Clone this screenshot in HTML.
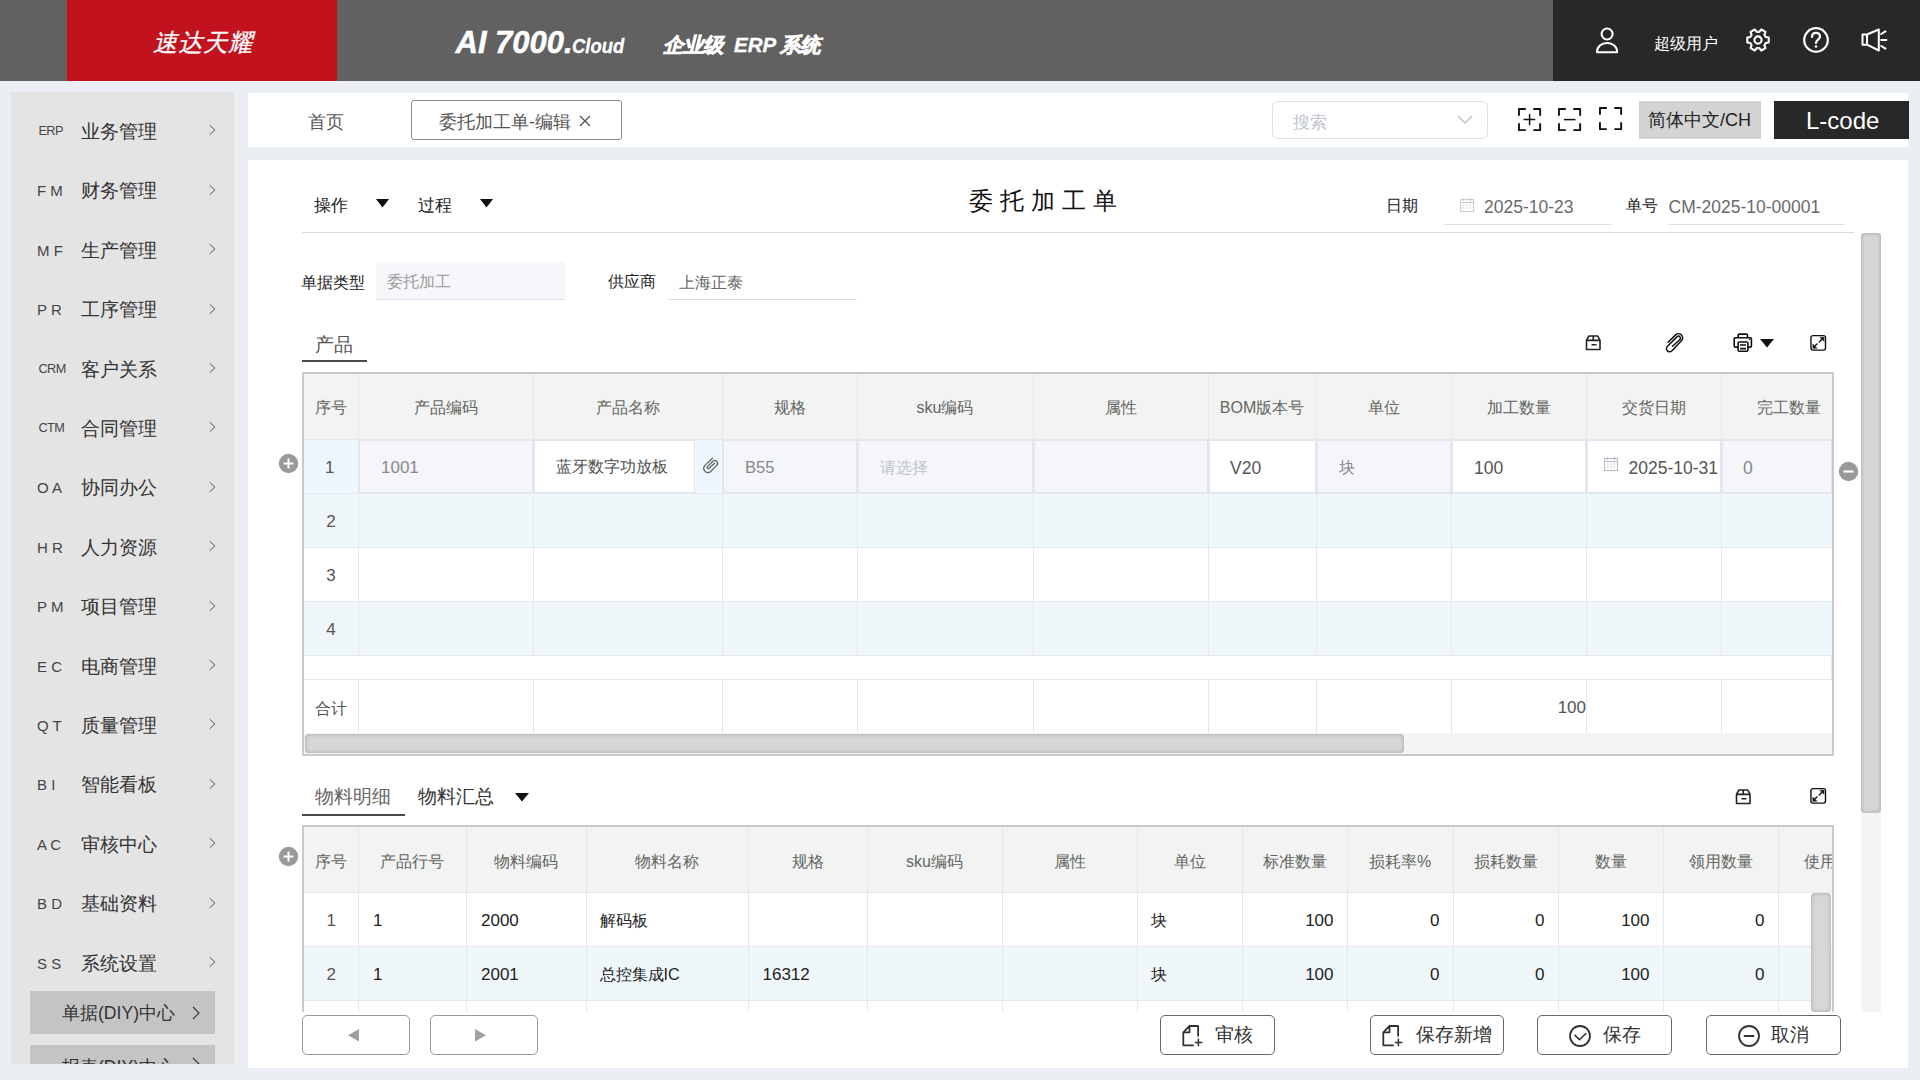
<!DOCTYPE html>
<html><head><meta charset="utf-8"><title>委托加工单</title>
<style>
html,body{margin:0;padding:0;}
body{width:1920px;height:1080px;overflow:hidden;background:#ebeef3;position:relative;font-family:"Liberation Sans",sans-serif;}
body div, body svg{position:absolute;}
body div div, body div svg{position:absolute;}
</style></head><body>
<div style="left:0px;top:0px;width:1920px;height:81px;background:#616161"></div>
<div style="left:67px;top:0px;width:270px;height:81px;background:#c1121e"></div>
<div style="left:1553px;top:0px;width:367px;height:81px;background:#282828"></div>
<div style="left:153px;top:28.00px;white-space:nowrap;font-size:24.5px;line-height:30px;color:#fff;font-style:italic;-webkit-text-stroke:0.3px #fff">速达天耀</div>
<div style="left:455.5px;top:22.5px;font-size:31px;line-height:40px;color:#fff;font-style:italic;font-weight:bold;white-space:nowrap;-webkit-text-stroke:0.5px #fff">AI 7000.</div>
<div style="left:571.5px;top:30.5px;font-size:20px;line-height:30px;color:#fff;font-style:italic;font-weight:bold;white-space:nowrap;transform:scaleX(0.92);transform-origin:0 0;-webkit-text-stroke:0.3px #fff">Cloud</div>
<div style="left:663px;top:29.50px;white-space:nowrap;font-size:20.5px;line-height:30px;color:#fff;font-style:italic;font-weight:bold;-webkit-text-stroke:0.6px #fff">企业级</div>
<div style="left:734px;top:30.00px;white-space:nowrap;font-size:20.5px;line-height:30px;color:#fff;font-style:italic;font-weight:bold;-webkit-text-stroke:0.3px #fff">ERP</div>
<div style="left:779.5px;top:29.50px;white-space:nowrap;font-size:20.5px;line-height:30px;color:#fff;font-style:italic;font-weight:bold;-webkit-text-stroke:0.6px #fff">系统</div>
<div style="left:1654px;top:31.50px;white-space:nowrap;font-size:16px;line-height:24px;color:#fff;">超级用户</div>
<svg style="left:1594px;top:26px" width="26" height="30" viewBox="0 0 26 30" fill="none" stroke="#fff" stroke-width="2" stroke-linejoin="round">
<circle cx="13.1" cy="8" r="5.5"/><path d="M3 26.3C3 20.8 7.5 17 13.1 17C18.7 17 23.2 20.8 23.2 26.3Z"/></svg>
<svg style="left:1746px;top:28px" width="24" height="24" viewBox="0 0 24 24" fill="none" stroke="#fff" stroke-width="2.1" stroke-linejoin="round">
<path d="M19.66 9.06 L22.72 9.53 L22.72 14.47 L19.66 14.94 L18.37 17.16 L19.50 20.04 L15.22 22.52 L13.28 20.10 L10.72 20.10 L8.78 22.52 L4.50 20.04 L5.63 17.16 L4.34 14.94 L1.28 14.47 L1.28 9.53 L4.34 9.06 L5.63 6.84 L4.50 3.96 L8.78 1.48 L10.72 3.90 L13.28 3.90 L15.22 1.48 L19.50 3.96 L18.37 6.84Z"/><circle cx="12" cy="12" r="3.6"/></svg>
<svg style="left:1802px;top:26px" width="28" height="28" viewBox="0 0 28 28" fill="none" stroke="#fff" stroke-width="2.2">
<circle cx="14" cy="14" r="11.8"/><path d="M10 11 C10 8 12 6.8 14 6.8 C16.3 6.8 18 8.3 18 10.5 C18 13.5 14 13.8 14 17" stroke-linecap="round"/><circle cx="14" cy="20.5" r="1.3" fill="#fff" stroke="none"/></svg>
<svg style="left:1860px;top:27px" width="28" height="26" viewBox="0 0 28 26" fill="none" stroke="#fff" stroke-width="2" stroke-linejoin="round">
<path d="M2.5 7.5h4.5L18.8 2.5v21L7 17.7H2.5z"/><path d="M7 7.5v10.2"/><path d="M21.2 7l4.3-2.6M21.2 13h5.2M21.2 19l4.3 2.6" stroke-linecap="round"/></svg>
<div style="left:11px;top:92px;width:223px;height:972px;background:#e4e4e4"></div>
<div style="left:38.5px;top:121.30px;white-space:nowrap;font-size:12.7px;line-height:20px;color:#444;letter-spacing:-0.6px">ERP</div>
<div style="left:81px;top:119.50px;white-space:nowrap;font-size:19.3px;line-height:24px;color:#333;">业务管理</div>
<svg style="left:207px;top:124.0px" width="10" height="14" viewBox="0 0 10 14" fill="none" stroke="#444" stroke-width="0.9"><path d="M2.7 1.3L7.9 6L2.7 10.7"/></svg>
<div style="left:37px;top:181.30px;white-space:nowrap;font-size:15px;line-height:20px;color:#444;">F M</div>
<div style="left:81px;top:179.00px;white-space:nowrap;font-size:19.3px;line-height:24px;color:#333;">财务管理</div>
<svg style="left:207px;top:183.5px" width="10" height="14" viewBox="0 0 10 14" fill="none" stroke="#444" stroke-width="0.9"><path d="M2.7 1.3L7.9 6L2.7 10.7"/></svg>
<div style="left:37px;top:240.80px;white-space:nowrap;font-size:15px;line-height:20px;color:#444;">M F</div>
<div style="left:81px;top:238.50px;white-space:nowrap;font-size:19.3px;line-height:24px;color:#333;">生产管理</div>
<svg style="left:207px;top:243.0px" width="10" height="14" viewBox="0 0 10 14" fill="none" stroke="#444" stroke-width="0.9"><path d="M2.7 1.3L7.9 6L2.7 10.7"/></svg>
<div style="left:37px;top:300.30px;white-space:nowrap;font-size:15px;line-height:20px;color:#444;">P R</div>
<div style="left:81px;top:298.00px;white-space:nowrap;font-size:19.3px;line-height:24px;color:#333;">工序管理</div>
<svg style="left:207px;top:302.5px" width="10" height="14" viewBox="0 0 10 14" fill="none" stroke="#444" stroke-width="0.9"><path d="M2.7 1.3L7.9 6L2.7 10.7"/></svg>
<div style="left:38.5px;top:359.30px;white-space:nowrap;font-size:12.7px;line-height:20px;color:#444;letter-spacing:-0.6px">CRM</div>
<div style="left:81px;top:357.50px;white-space:nowrap;font-size:19.3px;line-height:24px;color:#333;">客户关系</div>
<svg style="left:207px;top:362.0px" width="10" height="14" viewBox="0 0 10 14" fill="none" stroke="#444" stroke-width="0.9"><path d="M2.7 1.3L7.9 6L2.7 10.7"/></svg>
<div style="left:38.5px;top:418.30px;white-space:nowrap;font-size:12.7px;line-height:20px;color:#444;letter-spacing:-0.6px">CTM</div>
<div style="left:81px;top:416.50px;white-space:nowrap;font-size:19.3px;line-height:24px;color:#333;">合同管理</div>
<svg style="left:207px;top:421.0px" width="10" height="14" viewBox="0 0 10 14" fill="none" stroke="#444" stroke-width="0.9"><path d="M2.7 1.3L7.9 6L2.7 10.7"/></svg>
<div style="left:37px;top:478.30px;white-space:nowrap;font-size:15px;line-height:20px;color:#444;">O A</div>
<div style="left:81px;top:476.00px;white-space:nowrap;font-size:19.3px;line-height:24px;color:#333;">协同办公</div>
<svg style="left:207px;top:480.5px" width="10" height="14" viewBox="0 0 10 14" fill="none" stroke="#444" stroke-width="0.9"><path d="M2.7 1.3L7.9 6L2.7 10.7"/></svg>
<div style="left:37px;top:537.80px;white-space:nowrap;font-size:15px;line-height:20px;color:#444;">H R</div>
<div style="left:81px;top:535.50px;white-space:nowrap;font-size:19.3px;line-height:24px;color:#333;">人力资源</div>
<svg style="left:207px;top:540.0px" width="10" height="14" viewBox="0 0 10 14" fill="none" stroke="#444" stroke-width="0.9"><path d="M2.7 1.3L7.9 6L2.7 10.7"/></svg>
<div style="left:37px;top:597.30px;white-space:nowrap;font-size:15px;line-height:20px;color:#444;">P M</div>
<div style="left:81px;top:595.00px;white-space:nowrap;font-size:19.3px;line-height:24px;color:#333;">项目管理</div>
<svg style="left:207px;top:599.5px" width="10" height="14" viewBox="0 0 10 14" fill="none" stroke="#444" stroke-width="0.9"><path d="M2.7 1.3L7.9 6L2.7 10.7"/></svg>
<div style="left:37px;top:656.80px;white-space:nowrap;font-size:15px;line-height:20px;color:#444;">E C</div>
<div style="left:81px;top:654.50px;white-space:nowrap;font-size:19.3px;line-height:24px;color:#333;">电商管理</div>
<svg style="left:207px;top:659.0px" width="10" height="14" viewBox="0 0 10 14" fill="none" stroke="#444" stroke-width="0.9"><path d="M2.7 1.3L7.9 6L2.7 10.7"/></svg>
<div style="left:37px;top:715.80px;white-space:nowrap;font-size:15px;line-height:20px;color:#444;">Q T</div>
<div style="left:81px;top:713.50px;white-space:nowrap;font-size:19.3px;line-height:24px;color:#333;">质量管理</div>
<svg style="left:207px;top:718.0px" width="10" height="14" viewBox="0 0 10 14" fill="none" stroke="#444" stroke-width="0.9"><path d="M2.7 1.3L7.9 6L2.7 10.7"/></svg>
<div style="left:37px;top:775.30px;white-space:nowrap;font-size:15px;line-height:20px;color:#444;">B I</div>
<div style="left:81px;top:773.00px;white-space:nowrap;font-size:19.3px;line-height:24px;color:#333;">智能看板</div>
<svg style="left:207px;top:777.5px" width="10" height="14" viewBox="0 0 10 14" fill="none" stroke="#444" stroke-width="0.9"><path d="M2.7 1.3L7.9 6L2.7 10.7"/></svg>
<div style="left:37px;top:834.80px;white-space:nowrap;font-size:15px;line-height:20px;color:#444;">A C</div>
<div style="left:81px;top:832.50px;white-space:nowrap;font-size:19.3px;line-height:24px;color:#333;">审核中心</div>
<svg style="left:207px;top:837.0px" width="10" height="14" viewBox="0 0 10 14" fill="none" stroke="#444" stroke-width="0.9"><path d="M2.7 1.3L7.9 6L2.7 10.7"/></svg>
<div style="left:37px;top:894.30px;white-space:nowrap;font-size:15px;line-height:20px;color:#444;">B D</div>
<div style="left:81px;top:892.00px;white-space:nowrap;font-size:19.3px;line-height:24px;color:#333;">基础资料</div>
<svg style="left:207px;top:896.5px" width="10" height="14" viewBox="0 0 10 14" fill="none" stroke="#444" stroke-width="0.9"><path d="M2.7 1.3L7.9 6L2.7 10.7"/></svg>
<div style="left:37px;top:953.80px;white-space:nowrap;font-size:15px;line-height:20px;color:#444;">S S</div>
<div style="left:81px;top:951.50px;white-space:nowrap;font-size:19.3px;line-height:24px;color:#333;">系统设置</div>
<svg style="left:207px;top:956.0px" width="10" height="14" viewBox="0 0 10 14" fill="none" stroke="#444" stroke-width="0.9"><path d="M2.7 1.3L7.9 6L2.7 10.7"/></svg>
<div style="left:30px;top:991px;width:185px;height:43px;background:#c4c4c4"></div>
<div style="left:62px;top:1001.00px;white-space:nowrap;font-size:17.6px;line-height:24px;color:#333;">单据(DIY)中心</div>
<svg style="left:190px;top:1005px" width="12" height="16" viewBox="0 0 12 16" fill="none" stroke="#333" stroke-width="1.1"><path d="M3 2l6 6-6 6"/></svg>
<div style="left:30px;top:1045px;width:185px;height:19px;background:#c4c4c4;overflow:hidden"><div style="left:32px;top:10px;font-size:17.6px;line-height:24px;color:#333;white-space:nowrap">报表(DIY)中心</div><svg style="left:160px;top:11px" width="12" height="16" viewBox="0 0 12 16" fill="none" stroke="#333" stroke-width="1.1"><path d="M3 2l6 6-6 6"/></svg></div>
<div style="left:248px;top:93px;width:1660px;height:54px;background:#fff"></div>
<div style="left:308px;top:110.10px;white-space:nowrap;font-size:18px;line-height:24px;color:#555;">首页</div>
<div style="left:411px;top:100px;width:209px;height:38px;border:1px solid #8c8c8c;border-radius:3px;background:#fff"></div>
<div style="left:439px;top:110.10px;white-space:nowrap;font-size:18px;line-height:24px;color:#555;">委托加工单-编辑</div>
<svg style="left:578px;top:114px" width="14" height="14" viewBox="0 0 14 14" stroke="#555" stroke-width="1.4"><path d="M2 2l10 10M12 2L2 12"/></svg>
<div style="left:1272px;top:101px;width:214px;height:36px;border:1px solid #dcdfe6;border-radius:5px;background:#fff"></div>
<div style="left:1293px;top:110.00px;white-space:nowrap;font-size:16.5px;line-height:24px;color:#c0c4cc;">搜索</div>
<svg style="left:1456px;top:113px" width="18" height="14" viewBox="0 0 18 14" fill="none" stroke="#c0c4cc" stroke-width="1.5"><path d="M2 3l7 7 7-7"/></svg>
<svg style="left:1516.8px;top:106.8px" width="25" height="25" viewBox="0 0 25 25" fill="none" stroke="#111" stroke-width="1.9" stroke-linejoin="round">
<path d="M8.8 1.95H1.95V8.8M16.3 1.95H23.15V8.8M23.15 16.3V23.15H16.3M8.8 23.15H1.95V16.3"/><path d="M6.6 12.6h11.6M12.6 7v11.2" stroke-width="1.5"/></svg>
<svg style="left:1557.1px;top:106.8px" width="25" height="25" viewBox="0 0 25 25" fill="none" stroke="#111" stroke-width="1.9" stroke-linejoin="round">
<path d="M8.8 1.95H1.95V8.8M16.3 1.95H23.15V8.8M23.15 16.3V23.15H16.3M8.8 23.15H1.95V16.3"/><path d="M6.9 12.6h11.6" stroke-width="1.5"/></svg>
<svg style="left:1597.75px;top:105.9px" width="25" height="25" viewBox="0 0 25 25" fill="none" stroke="#111" stroke-width="1.9" stroke-linejoin="round">
<path d="M8.8 1.95H1.95V8.8M16.3 1.95H23.15V8.8M23.15 16.3V23.15H16.3M8.8 23.15H1.95V16.3"/></svg>
<div style="left:1639px;top:101px;width:122px;height:38px;background:#d3d3d3"></div>
<div style="left:1648px;top:108.00px;white-space:nowrap;font-size:18px;line-height:24px;color:#222;">简体中文/CH</div>
<div style="left:1774px;top:101px;width:135px;height:38px;background:#282828"></div>
<div style="left:1806px;top:106.00px;white-space:nowrap;font-size:24px;line-height:30px;color:#fff;">L-code</div>
<div style="left:248px;top:160px;width:1660px;height:908px;background:#fff"></div>
<div style="left:314px;top:194.00px;white-space:nowrap;font-size:17px;line-height:24px;color:#222;">操作</div>
<svg style="left:376px;top:199px" width="13" height="9" viewBox="0 0 13 9"><path d="M0 0h13L6.5 8.5z" fill="#111"/></svg>
<div style="left:417.5px;top:194.00px;white-space:nowrap;font-size:17px;line-height:24px;color:#222;">过程</div>
<svg style="left:479.5px;top:199px" width="13" height="9" viewBox="0 0 13 9"><path d="M0 0h13L6.5 8.5z" fill="#111"/></svg>
<div style="left:968.5px;top:186.25px;white-space:nowrap;font-size:24px;line-height:30px;color:#111;letter-spacing:7px">委托加工单</div>
<div style="left:302px;top:232px;width:1552px;height:1px;background:#dcdcdc"></div>
<div style="left:1386px;top:194.25px;white-space:nowrap;font-size:16px;line-height:24px;color:#222;">日期</div>
<div style="left:1444px;top:224px;width:167px;height:1px;background:#dcdfe6"></div>
<svg style="left:1459px;top:197px" width="16" height="16" viewBox="0 0 16 16" fill="none" stroke="#c8ccd4" stroke-width="1.1">
<rect x="1.5" y="2.5" width="13" height="12"/><path d="M1.5 5.5h13M4.5 1v3M11.5 1v3"/><path d="M4 8h1.5M7.3 8h1.5M10.5 8h1.5M4 11h1.5M7.3 11h1.5M10.5 11h1.5" stroke-width="1"/></svg>
<div style="left:1484px;top:195.00px;white-space:nowrap;font-size:17.5px;line-height:24px;color:#6a6a6a;">2025-10-23</div>
<div style="left:1625.5px;top:194.25px;white-space:nowrap;font-size:16px;line-height:24px;color:#222;">单号</div>
<div style="left:1669px;top:224px;width:176px;height:1px;background:#dcdfe6"></div>
<div style="left:1668.5px;top:195.00px;white-space:nowrap;font-size:17.5px;line-height:24px;color:#6a6a6a;">CM-2025-10-00001</div>
<div style="left:1861px;top:233px;width:20px;height:779px;background:#f4f4f4"></div>
<div style="left:1861px;top:233px;width:20px;height:580px;background:#d7d7d7;box-shadow:inset 0 0 4px rgba(0,0,0,0.25);border-radius:4px"></div>
<div style="left:300.5px;top:270.10px;white-space:nowrap;font-size:16.2px;line-height:24px;color:#222;">单据类型</div>
<div style="left:376px;top:262px;width:189px;height:37px;background:#f5f7fa;border-bottom:1px solid #dcdfe6"></div>
<div style="left:386.5px;top:269.50px;white-space:nowrap;font-size:16px;line-height:24px;color:#9a9a9a;">委托加工</div>
<div style="left:608px;top:270.10px;white-space:nowrap;font-size:16px;line-height:24px;color:#222;">供应商</div>
<div style="left:668px;top:299px;width:189px;height:1px;background:#dcdfe6"></div>
<div style="left:678.5px;top:269.50px;white-space:nowrap;font-size:16.2px;line-height:24px;color:#666;">上海正泰</div>
<div style="left:315px;top:332.50px;white-space:nowrap;font-size:18.5px;line-height:24px;color:#555;">产品</div>
<div style="left:302px;top:360px;width:65px;height:2px;background:#4a4a4a"></div>
<svg style="left:1584px;top:333px" width="19" height="19" viewBox="0 0 19 19" fill="none" stroke="#222" stroke-width="1.6" stroke-linejoin="round">
<path d="M5 3h8.8l2.2 4.4v9.1H2.5V7.4z"/><path d="M2.5 7.4h13.5M9.25 3v4.4M7.5 11.7h5"/></svg>
<svg style="left:1660px;top:328px" width="30" height="30" viewBox="0 0 30 30" fill="none" stroke="#111" stroke-width="1.5" stroke-linecap="round" stroke-linejoin="round">
<path d="M8.1 14.2L15.6 6.9A4 4 0 0 1 21.4 12.8L11.7 23A2.9 2.9 0 0 1 7.5 18.3L17.2 8.6A1.75 1.75 0 0 1 19.7 11.7L12.5 18.3"/></svg>
<svg style="left:1732px;top:332px" width="22" height="22" viewBox="0 0 22 22" fill="none" stroke="#111" stroke-width="1.6" stroke-linejoin="round">
<path d="M6.2 5.8V3.1a1 1 0 0 1 1-1h7.3a1 1 0 0 1 1 1v2.7"/><path d="M6.1 15.1H3.2a1 1 0 0 1-1-1V6.8a1 1 0 0 1 1-1h15.2a1 1 0 0 1 1 1v7.3a1 1 0 0 1-1 1H15.9"/><rect x="6.1" y="10" width="9.8" height="9.2" rx="1"/><path d="M8 13h6M8 16.6h6"/><circle cx="17.5" cy="7.4" r="0.7" fill="#111" stroke="none"/></svg>
<svg style="left:1760px;top:339px" width="14" height="9" viewBox="0 0 14 9"><path d="M0 0h14L7 8.5z" fill="#111"/></svg>
<svg style="left:1809px;top:334px" width="18" height="18" viewBox="0 0 18 18" fill="none" stroke="#111" stroke-width="1.4" stroke-linecap="round">
<rect x="1.95" y="1.6" width="14.55" height="14.5" rx="2"/><path d="M10.3 7.9L13.6 4.6M4.8 13.1L8 9.9"/><path d="M11.2 3.3h3.7v3.7zM3.9 10.5v3.7h3.7z" fill="#111" stroke-width="0.6" stroke-linejoin="round"/></svg>
<div style="left:302px;top:372px;width:1532px;height:384px;background:#c9c9c9"></div>
<div style="left:304px;top:374px;width:1528px;height:380px;background:#fff"></div>
<div style="left:304px;top:374px;width:1528px;height:66px;background:#f3f3f3"></div>
<div style="left:304px;top:440px;width:1528px;height:53px;background:#f4f5fa"></div>
<div style="left:304px;top:440px;width:54px;height:53px;background:#eef6fe"></div>
<div style="left:304px;top:494px;width:1528px;height:53px;background:#f0f7fb"></div>
<div style="left:304px;top:548px;width:1528px;height:53px;background:#fff"></div>
<div style="left:304px;top:602px;width:1528px;height:53px;background:#f0f7fb"></div>
<div style="left:304px;top:439px;width:1528px;height:1px;background:#e6e8f0"></div>
<div style="left:304px;top:493px;width:1528px;height:1px;background:#e6e8f0"></div>
<div style="left:304px;top:547px;width:1528px;height:1px;background:#e6e8f0"></div>
<div style="left:304px;top:601px;width:1528px;height:1px;background:#e6e8f0"></div>
<div style="left:304px;top:655px;width:1528px;height:1px;background:#e6e8f0"></div>
<div style="left:304px;top:679px;width:1528px;height:1px;background:#e6e8f0"></div>
<div style="left:358px;top:374px;width:1px;height:281px;background:#e6e8f0"></div>
<div style="left:358px;top:680px;width:1px;height:53px;background:#e6e8f0"></div>
<div style="left:533px;top:374px;width:1px;height:281px;background:#e6e8f0"></div>
<div style="left:533px;top:680px;width:1px;height:53px;background:#e6e8f0"></div>
<div style="left:722px;top:374px;width:1px;height:281px;background:#e6e8f0"></div>
<div style="left:722px;top:680px;width:1px;height:53px;background:#e6e8f0"></div>
<div style="left:857px;top:374px;width:1px;height:281px;background:#e6e8f0"></div>
<div style="left:857px;top:680px;width:1px;height:53px;background:#e6e8f0"></div>
<div style="left:1033px;top:374px;width:1px;height:281px;background:#e6e8f0"></div>
<div style="left:1033px;top:680px;width:1px;height:53px;background:#e6e8f0"></div>
<div style="left:1208px;top:374px;width:1px;height:281px;background:#e6e8f0"></div>
<div style="left:1208px;top:680px;width:1px;height:53px;background:#e6e8f0"></div>
<div style="left:1316px;top:374px;width:1px;height:281px;background:#e6e8f0"></div>
<div style="left:1316px;top:680px;width:1px;height:53px;background:#e6e8f0"></div>
<div style="left:1451px;top:374px;width:1px;height:281px;background:#e6e8f0"></div>
<div style="left:1451px;top:680px;width:1px;height:53px;background:#e6e8f0"></div>
<div style="left:1586px;top:374px;width:1px;height:281px;background:#e6e8f0"></div>
<div style="left:1586px;top:680px;width:1px;height:53px;background:#e6e8f0"></div>
<div style="left:1721px;top:374px;width:1px;height:281px;background:#e6e8f0"></div>
<div style="left:1721px;top:680px;width:1px;height:53px;background:#e6e8f0"></div>
<div style="left:1831px;top:655px;width:1px;height:25px;background:#e6e8f0"></div>
<div style="left:304px;top:395.80px;width:54px;text-align:center;font-size:16px;line-height:24px;color:#62675f;">序号</div>
<div style="left:358px;top:395.80px;width:175px;text-align:center;font-size:16px;line-height:24px;color:#62675f;">产品编码</div>
<div style="left:533px;top:395.80px;width:189px;text-align:center;font-size:16px;line-height:24px;color:#62675f;">产品名称</div>
<div style="left:722px;top:395.80px;width:135px;text-align:center;font-size:16px;line-height:24px;color:#62675f;">规格</div>
<div style="left:857px;top:395.80px;width:176px;text-align:center;font-size:16px;line-height:24px;color:#62675f;">sku编码</div>
<div style="left:1033px;top:395.80px;width:175px;text-align:center;font-size:16px;line-height:24px;color:#62675f;">属性</div>
<div style="left:1208px;top:395.80px;width:108px;text-align:center;font-size:16px;line-height:24px;color:#62675f;">BOM版本号</div>
<div style="left:1316px;top:395.80px;width:135px;text-align:center;font-size:16px;line-height:24px;color:#62675f;">单位</div>
<div style="left:1451px;top:395.80px;width:135px;text-align:center;font-size:16px;line-height:24px;color:#62675f;">加工数量</div>
<div style="left:1586px;top:395.80px;width:135px;text-align:center;font-size:16px;line-height:24px;color:#62675f;">交货日期</div>
<div style="left:1721px;top:395.8px;width:111px;height:24px;overflow:hidden"><div style="left:0;top:0;width:135px;text-align:center;font-size:16px;line-height:24px;color:#62675f;white-space:nowrap">完工数量</div></div>
<div style="left:359px;top:440px;width:174px;height:53px;background:#f5f6fa;border:1px solid #e2e5ee;box-sizing:border-box"></div>
<div style="left:534px;top:440px;width:161px;height:53px;background:#fff;border:1px solid #e2e5ee;box-sizing:border-box"></div>
<div style="left:723px;top:440px;width:134px;height:53px;background:#f5f6fa;border:1px solid #e2e5ee;box-sizing:border-box"></div>
<div style="left:858px;top:440px;width:175px;height:53px;background:#f5f6fa;border:1px solid #e2e5ee;box-sizing:border-box"></div>
<div style="left:1034px;top:440px;width:174px;height:53px;background:#f5f6fa;border:1px solid #e2e5ee;box-sizing:border-box"></div>
<div style="left:1209px;top:440px;width:107px;height:53px;background:#fff;border:1px solid #e2e5ee;box-sizing:border-box"></div>
<div style="left:1317px;top:440px;width:134px;height:53px;background:#f5f6fa;border:1px solid #e2e5ee;box-sizing:border-box"></div>
<div style="left:1452px;top:440px;width:134px;height:53px;background:#fff;border:1px solid #e2e5ee;box-sizing:border-box"></div>
<div style="left:1587px;top:440px;width:134px;height:53px;background:#fff;border:1px solid #e2e5ee;box-sizing:border-box"></div>
<div style="left:1722px;top:440px;width:110px;height:53px;background:#f5f6fa;border:1px solid #e2e5ee;box-sizing:border-box"></div>
<div style="left:695px;top:440px;width:27px;height:53px;background:#eef6fe"></div>
<div style="left:325px;top:455.70px;white-space:nowrap;font-size:17px;line-height:24px;color:#555;">1</div>
<div style="left:381px;top:456.00px;white-space:nowrap;font-size:17px;line-height:24px;color:#888;">1001</div>
<div style="left:556px;top:454.70px;white-space:nowrap;font-size:16px;line-height:24px;color:#505050;">蓝牙数字功放板</div>
<svg style="left:698px;top:450px" width="26" height="26" viewBox="0 0 26 26" fill="none" stroke="#5f6560" stroke-width="1.3" stroke-linecap="round" stroke-linejoin="round">
<path d="M14.5 8.2L7 15.4A4.2 4.2 0 0 0 12.5 21.7L18.8 15.4A2.9 2.9 0 0 0 15.4 10.8L9.2 16.9A1.2 1.2 0 0 0 11.1 18.3L16.6 13.3"/></svg>
<div style="left:745px;top:455.40px;white-space:nowrap;font-size:16.5px;line-height:24px;color:#888;">B55</div>
<div style="left:879.5px;top:454.70px;white-space:nowrap;font-size:16.4px;line-height:24px;color:#c0c4cc;">请选择</div>
<div style="left:1230px;top:455.70px;white-space:nowrap;font-size:17.5px;line-height:24px;color:#555;">V20</div>
<div style="left:1338.5px;top:454.50px;white-space:nowrap;font-size:16.2px;line-height:24px;color:#888;">块</div>
<div style="left:1474px;top:455.70px;white-space:nowrap;font-size:17.5px;line-height:24px;color:#555;">100</div>
<svg style="left:1602.5px;top:456px" width="16" height="16" viewBox="0 0 16 16" fill="none" stroke="#b8bcc4" stroke-width="1.1">
<rect x="1.5" y="2.5" width="13" height="12"/><path d="M1.5 5.5h13M4.5 1v3M11.5 1v3"/><path d="M4 8h1.5M7.3 8h1.5M10.5 8h1.5M4 11h1.5M7.3 11h1.5M10.5 11h1.5" stroke-width="1"/></svg>
<div style="left:1628.5px;top:455.70px;white-space:nowrap;font-size:17.5px;line-height:24px;color:#555;">2025-10-31</div>
<div style="left:1743px;top:455.70px;white-space:nowrap;font-size:17.5px;line-height:24px;color:#888;">0</div>
<div style="left:304px;top:509.95px;width:54px;text-align:center;font-size:17px;line-height:24px;color:#555;">2</div>
<div style="left:304px;top:563.70px;width:54px;text-align:center;font-size:17px;line-height:24px;color:#555;">3</div>
<div style="left:304px;top:617.50px;width:54px;text-align:center;font-size:17px;line-height:24px;color:#555;">4</div>
<div style="left:315px;top:696.00px;white-space:nowrap;font-size:16.2px;line-height:24px;color:#555;">合计</div>
<div style="left:1451px;top:695.70px;width:135px;text-align:right;font-size:17px;line-height:24px;color:#555;">100</div>
<div style="left:304px;top:733px;width:1528px;height:21px;background:#f3f3f3"></div>
<div style="left:305px;top:734px;width:1099px;height:19px;background:#d7d7d7;box-shadow:inset 0 0 4px rgba(0,0,0,0.25);border-radius:4px"></div>
<svg style="left:277.8px;top:452.8px" width="21" height="21" viewBox="0 0 21 21"><circle cx="10.5" cy="10.5" r="9.7" fill="#999"/><path d="M10.5 5.5v10M5.5 10.5h10" stroke="#fff" stroke-width="2"/></svg>
<svg style="left:1837.5px;top:460.8px" width="21" height="21" viewBox="0 0 21 21"><circle cx="10.5" cy="10.5" r="9.7" fill="#999"/><path d="M5.5 10.5h10" stroke="#fff" stroke-width="2.2"/></svg>
<div style="left:315px;top:785.40px;white-space:nowrap;font-size:18.5px;line-height:24px;color:#666;">物料明细</div>
<div style="left:417.5px;top:785.40px;white-space:nowrap;font-size:18.5px;line-height:24px;color:#333;">物料汇总</div>
<svg style="left:515px;top:792.5px" width="14" height="9" viewBox="0 0 14 9"><path d="M0 0h14L7 8.5z" fill="#111"/></svg>
<div style="left:302px;top:814px;width:103px;height:2px;background:#4a4a4a"></div>
<svg style="left:1733.7px;top:787px" width="19" height="19" viewBox="0 0 19 19" fill="none" stroke="#222" stroke-width="1.6" stroke-linejoin="round">
<path d="M5 3h8.8l2.2 4.4v9.1H2.5V7.4z"/><path d="M2.5 7.4h13.5M9.25 3v4.4M7.5 11.7h5"/></svg>
<svg style="left:1809px;top:787px" width="18" height="18" viewBox="0 0 18 18" fill="none" stroke="#111" stroke-width="1.4" stroke-linecap="round">
<rect x="1.95" y="1.6" width="14.55" height="14.5" rx="2"/><path d="M10.3 7.9L13.6 4.6M4.8 13.1L8 9.9"/><path d="M11.2 3.3h3.7v3.7zM3.9 10.5v3.7h3.7z" fill="#111" stroke-width="0.6" stroke-linejoin="round"/></svg>
<svg style="left:277.8px;top:845.9px" width="21" height="21" viewBox="0 0 21 21"><circle cx="10.5" cy="10.5" r="9.7" fill="#999"/><path d="M10.5 5.5v10M5.5 10.5h10" stroke="#fff" stroke-width="2"/></svg>
<div style="left:302px;top:825px;width:1532px;height:187px;background:#c9c9c9"></div>
<div style="left:304px;top:827px;width:1528px;height:185px;background:#fff"></div>
<div style="left:304px;top:827px;width:1528px;height:65px;background:#f3f3f3"></div>
<div style="left:304px;top:947px;width:1528px;height:53px;background:#f0f7fb"></div>
<div style="left:304px;top:892px;width:1528px;height:1px;background:#e6e8f0"></div>
<div style="left:304px;top:946px;width:1528px;height:1px;background:#e6e8f0"></div>
<div style="left:304px;top:1000px;width:1528px;height:1px;background:#e6e8f0"></div>
<div style="left:358px;top:827px;width:1px;height:185px;background:#e6e8f0"></div>
<div style="left:466px;top:827px;width:1px;height:185px;background:#e6e8f0"></div>
<div style="left:586px;top:827px;width:1px;height:185px;background:#e6e8f0"></div>
<div style="left:748px;top:827px;width:1px;height:185px;background:#e6e8f0"></div>
<div style="left:867px;top:827px;width:1px;height:185px;background:#e6e8f0"></div>
<div style="left:1002px;top:827px;width:1px;height:185px;background:#e6e8f0"></div>
<div style="left:1137px;top:827px;width:1px;height:185px;background:#e6e8f0"></div>
<div style="left:1242px;top:827px;width:1px;height:185px;background:#e6e8f0"></div>
<div style="left:1347px;top:827px;width:1px;height:185px;background:#e6e8f0"></div>
<div style="left:1453px;top:827px;width:1px;height:185px;background:#e6e8f0"></div>
<div style="left:1558px;top:827px;width:1px;height:185px;background:#e6e8f0"></div>
<div style="left:1663px;top:827px;width:1px;height:185px;background:#e6e8f0"></div>
<div style="left:1778px;top:827px;width:1px;height:185px;background:#e6e8f0"></div>
<div style="left:304px;top:850.40px;width:54px;text-align:center;font-size:16px;line-height:24px;color:#62675f;">序号</div>
<div style="left:358px;top:850.40px;width:108px;text-align:center;font-size:16px;line-height:24px;color:#62675f;">产品行号</div>
<div style="left:466px;top:850.40px;width:120px;text-align:center;font-size:16px;line-height:24px;color:#62675f;">物料编码</div>
<div style="left:586px;top:850.40px;width:162px;text-align:center;font-size:16px;line-height:24px;color:#62675f;">物料名称</div>
<div style="left:748px;top:850.40px;width:119px;text-align:center;font-size:16px;line-height:24px;color:#62675f;">规格</div>
<div style="left:867px;top:850.40px;width:135px;text-align:center;font-size:16px;line-height:24px;color:#62675f;">sku编码</div>
<div style="left:1002px;top:850.40px;width:135px;text-align:center;font-size:16px;line-height:24px;color:#62675f;">属性</div>
<div style="left:1137px;top:850.40px;width:105px;text-align:center;font-size:16px;line-height:24px;color:#62675f;">单位</div>
<div style="left:1242px;top:850.40px;width:105px;text-align:center;font-size:16px;line-height:24px;color:#62675f;">标准数量</div>
<div style="left:1347px;top:850.40px;width:106px;text-align:center;font-size:16px;line-height:24px;color:#62675f;">损耗率%</div>
<div style="left:1453px;top:850.40px;width:105px;text-align:center;font-size:16px;line-height:24px;color:#62675f;">损耗数量</div>
<div style="left:1558px;top:850.40px;width:105px;text-align:center;font-size:16px;line-height:24px;color:#62675f;">数量</div>
<div style="left:1663px;top:850.40px;width:115px;text-align:center;font-size:16px;line-height:24px;color:#62675f;">领用数量</div>
<div style="left:1778px;top:850.4px;width:54px;height:24px;overflow:hidden"><div style="left:0;top:0;width:115px;text-align:center;font-size:16px;line-height:24px;color:#62675f;white-space:nowrap">使用数量</div></div>
<div style="left:304px;top:909.20px;width:54.3px;text-align:center;font-size:17px;line-height:24px;color:#555;">1</div>
<div style="left:373px;top:909.20px;white-space:nowrap;font-size:17px;line-height:24px;color:#222;">1</div>
<div style="left:481px;top:909.20px;white-space:nowrap;font-size:17px;line-height:24px;color:#222;">2000</div>
<div style="left:599.5px;top:908.20px;white-space:nowrap;font-size:16.2px;line-height:24px;color:#222;">解码板</div>
<div style="left:1150.5px;top:908.20px;white-space:nowrap;font-size:16.2px;line-height:24px;color:#222;">块</div>
<div style="left:1242px;top:909.20px;width:91.5px;text-align:right;font-size:17px;line-height:24px;color:#222;">100</div>
<div style="left:1347px;top:909.20px;width:92.5px;text-align:right;font-size:17px;line-height:24px;color:#222;">0</div>
<div style="left:1453px;top:909.20px;width:91.5px;text-align:right;font-size:17px;line-height:24px;color:#222;">0</div>
<div style="left:1558px;top:909.20px;width:91.5px;text-align:right;font-size:17px;line-height:24px;color:#222;">100</div>
<div style="left:1663px;top:909.20px;width:101.5px;text-align:right;font-size:17px;line-height:24px;color:#222;">0</div>
<div style="left:304px;top:963.10px;width:54.3px;text-align:center;font-size:17px;line-height:24px;color:#555;">2</div>
<div style="left:373px;top:963.10px;white-space:nowrap;font-size:17px;line-height:24px;color:#222;">1</div>
<div style="left:481px;top:963.10px;white-space:nowrap;font-size:17px;line-height:24px;color:#222;">2001</div>
<div style="left:599.5px;top:962.10px;white-space:nowrap;font-size:16.2px;line-height:24px;color:#222;">总控集成IC</div>
<div style="left:762.5px;top:963.10px;white-space:nowrap;font-size:17px;line-height:24px;color:#222;">16312</div>
<div style="left:1150.5px;top:962.10px;white-space:nowrap;font-size:16.2px;line-height:24px;color:#222;">块</div>
<div style="left:1242px;top:963.10px;width:91.5px;text-align:right;font-size:17px;line-height:24px;color:#222;">100</div>
<div style="left:1347px;top:963.10px;width:92.5px;text-align:right;font-size:17px;line-height:24px;color:#222;">0</div>
<div style="left:1453px;top:963.10px;width:91.5px;text-align:right;font-size:17px;line-height:24px;color:#222;">0</div>
<div style="left:1558px;top:963.10px;width:91.5px;text-align:right;font-size:17px;line-height:24px;color:#222;">100</div>
<div style="left:1663px;top:963.10px;width:101.5px;text-align:right;font-size:17px;line-height:24px;color:#222;">0</div>
<div style="left:1811px;top:893px;width:20px;height:119px;background:#d7d7d7;box-shadow:inset 0 0 4px rgba(0,0,0,0.25);border-radius:4px"></div>
<div style="left:302px;top:1015px;width:107.5px;height:39.5px;border:1px solid #999;border-radius:5px;background:#fff;box-sizing:border-box"></div>
<div style="left:430px;top:1015px;width:107.5px;height:39.5px;border:1px solid #999;border-radius:5px;background:#fff;box-sizing:border-box"></div>
<svg style="left:347.5px;top:1028.5px" width="12" height="13" viewBox="0 0 12 13"><path d="M11 0v12.5L0 6.25z" fill="#a0a0a0"/></svg>
<svg style="left:475px;top:1028.5px" width="12" height="13" viewBox="0 0 12 13"><path d="M0 0v12.5L11 6.25z" fill="#a0a0a0"/></svg>
<div style="left:1160px;top:1015px;width:115px;height:40px;border:1px solid #666;border-radius:5px;background:#fff;box-sizing:border-box"></div>
<svg style="left:1180px;top:1023px" width="24" height="25" viewBox="0 0 24 25" fill="none" stroke="#333" stroke-width="1.8" stroke-linejoin="round">
<path d="M13.7 22.3H3.3V9.3L9.5 3H18.1V13.6"/><path d="M9.5 3V9.3H3.3"/><path d="M14.8 19.4h7.6M18.4 15.6v7.6" stroke-width="1.5"/></svg>
<div style="left:1215px;top:1022.30px;white-space:nowrap;font-size:19.3px;line-height:26px;color:#333;">审核</div>
<div style="left:1369.5px;top:1015px;width:134.5px;height:40px;border:1px solid #666;border-radius:5px;background:#fff;box-sizing:border-box"></div>
<svg style="left:1380.2px;top:1023px" width="24" height="25" viewBox="0 0 24 25" fill="none" stroke="#333" stroke-width="1.8" stroke-linejoin="round">
<path d="M13.7 22.3H3.3V9.3L9.5 3H18.1V13.6"/><path d="M9.5 3V9.3H3.3"/><path d="M14.8 19.4h7.6M18.4 15.6v7.6" stroke-width="1.5"/></svg>
<div style="left:1415.5px;top:1022.30px;white-space:nowrap;font-size:19.3px;line-height:26px;color:#333;">保存新增</div>
<div style="left:1537px;top:1015px;width:135px;height:40px;border:1px solid #666;border-radius:5px;background:#fff;box-sizing:border-box"></div>
<svg style="left:1567.5px;top:1024px" width="24" height="24" viewBox="0 0 24 24" fill="none" stroke="#333" stroke-width="1.8"><circle cx="12" cy="12" r="10"/><path d="M7 11.4l4.5 4.3 6.3-6.2" stroke-width="1.6" stroke-linecap="round" stroke-linejoin="round"/></svg>
<div style="left:1602.5px;top:1022.30px;white-space:nowrap;font-size:19.3px;line-height:26px;color:#333;">保存</div>
<div style="left:1706px;top:1015px;width:135px;height:40px;border:1px solid #666;border-radius:5px;background:#fff;box-sizing:border-box"></div>
<svg style="left:1736.5px;top:1024px" width="24" height="24" viewBox="0 0 24 24" fill="none" stroke="#333" stroke-width="1.8"><circle cx="12" cy="12" r="10"/><path d="M7.5 12h9" stroke-linecap="round"/></svg>
<div style="left:1771px;top:1022.30px;white-space:nowrap;font-size:19.3px;line-height:26px;color:#333;">取消</div>
</body></html>
